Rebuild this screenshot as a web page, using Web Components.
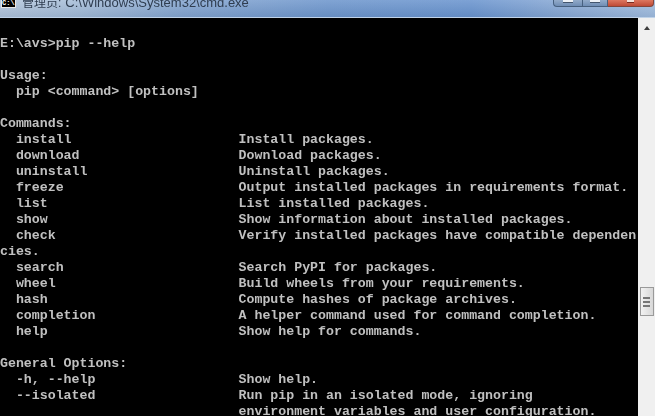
<!DOCTYPE html>
<html>
<head>
<meta charset="utf-8">
<title>cmd</title>
<style>
  html, body { margin: 0; padding: 0; background: #000; }
  body { width: 655px; height: 416px; overflow: hidden; }
</style>
</head>
<body>
<cmd-window role-text="管理员:" title-text="C:\Windows\System32\cmd.exe"><console-text>E:\avs&gt;pip --help

Usage:
  pip &lt;command&gt; [options]

Commands:
  install                     Install packages.
  download                    Download packages.
  uninstall                   Uninstall packages.
  freeze                      Output installed packages in requirements format.
  list                        List installed packages.
  show                        Show information about installed packages.
  check                       Verify installed packages have compatible dependen
cies.
  search                      Search PyPI for packages.
  wheel                       Build wheels from your requirements.
  hash                        Compute hashes of package archives.
  completion                  A helper command used for command completion.
  help                        Show help for commands.

General Options:
  -h, --help                  Show help.
  --isolated                  Run pip in an isolated mode, ignoring
                              environment variables and user configuration.</console-text></cmd-window>
<script>
class WindowButtons extends HTMLElement {
  constructor() {
    super();
    this.attachShadow({ mode: 'open' }).innerHTML = `
      <style>
        :host { display: flex; align-self: flex-start; margin-right: 1px; }
        div {
          height: 7px;
          box-sizing: border-box;
          border: 1px solid #47607f;
          border-top: 0;
          display: flex;
          justify-content: center;
          background: linear-gradient(#93abc9, #6f8db4);
        }
        .min { width: 29px; border-radius: 0 0 0 4px; border-right: 0; }
        .max { width: 26px; }
        .close { width: 46px; border-left: 0; border-radius: 0 0 4px 0; border-color: #84453a; background: linear-gradient(#dd7760, #bf4a36); }
        i { display: block; width: 10px; height: 3px; box-sizing: border-box; background: #eef2f7; border-bottom: 1px solid #44566e; }
        .close i { width: 7px; background: #f6e3dc; border-color: #7a2c20; }
      </style>
      <div class="min"><i></i></div>
      <div class="max"><i></i></div>
      <div class="close"><i></i></div>`;
  }
}

class TitleBar extends HTMLElement {
  constructor() {
    super();
    this.attachShadow({ mode: 'open' }).innerHTML = `
      <style>
        :host {
          display: flex;
          align-items: flex-start;
          justify-content: space-between;
          height: 18px;
          box-sizing: border-box;
          overflow: hidden;
          border-bottom: 1px solid #bfd2e8;
          background:
            linear-gradient(rgba(255,255,255,.12), rgba(40,70,110,.12)),
            linear-gradient(90deg, #b4c6dc 0, #a6bdd8 12%, #86a6d0 28%, #6f97cd 50%, #6b95cf 72%, #8fadd6 88%, #a4bfe0 100%);
        }
        .left { display: flex; align-items: flex-start; gap: 6px; margin-left: 1px; }
        .icon {
          width: 15px; height: 8px;
          box-sizing: border-box;
          background: #000; border: 1px solid #e8e8e8; border-top: 0;
          color: #fff;
          font: bold 7px/7px "Liberation Mono", monospace;
          overflow: hidden;
        }
        .title {
          margin-top: -5px;
          font: 13px/15px "Liberation Sans", "Noto Sans CJK SC", sans-serif;
          color: #2f3d50;
          white-space: nowrap;
          filter: blur(.3px);
          display: flex;
          align-items: baseline;
          gap: 4px;
        }
        .role { font-size: 12px; }
      </style>
      <div class="left"><span class="icon">C:\\</span><span class="title"><span class="role" id="role"></span><span><slot></slot></span></span></div>
      <window-buttons></window-buttons>`;
  }

  set role(text) {
    this.shadowRoot.getElementById('role').textContent = text;
  }
}

class ConsoleText extends HTMLElement {
  constructor() {
    super();
    this.attachShadow({ mode: 'open' }).innerHTML = `
      <style>
        :host {
          display: block;
          flex: 1;
          min-width: 0;
          overflow: hidden;
          background: #000;
          color: #c0c0c0;
          font: bold 13.25px/16px "Liberation Mono", "DejaVu Sans Mono", monospace;
          padding-top: 18px;
          box-sizing: border-box;
        }
        .lines { white-space: pre; filter: blur(.25px); }
      </style>
      <div class="lines"><slot></slot></div>`;
  }
}

class ScrollBar extends HTMLElement {
  constructor() {
    super();
    this.attachShadow({ mode: 'open' }).innerHTML = `
      <style>
        :host {
          display: flex;
          flex-direction: column;
          align-items: center;
          width: 17px;
          flex: none;
          background: #f0f0f0;
        }
        .arrow {
          margin-top: 8px;
          width: 0; height: 0;
          border: 3px solid transparent;
          border-top: 0;
          border-bottom: 4px solid #3c3c3c;
        }
        .thumb {
          margin-top: 257px;
          width: 14px; height: 29px;
          box-sizing: border-box;
          border: 1px solid #9a9a9a;
          background: linear-gradient(90deg, #f2f2f2, #d8d8d8);
          display: flex;
          flex-direction: column;
          align-items: center;
          justify-content: center;
          gap: 2px;
        }
        .thumb i { display: block; width: 7px; height: 2px; background: #777; }
      </style>
      <div class="arrow"></div>
      <div class="thumb"><i></i><i></i><i></i></div>`;
  }
}

class CmdWindow extends HTMLElement {
  constructor() {
    super();
    this.attachShadow({ mode: 'open' }).innerHTML = `
      <style>
        :host { display: flex; flex-direction: column; width: 655px; height: 416px; overflow: hidden; background: #000; }
        .body { display: flex; flex: 1; min-height: 0; }
        .content { display: flex; flex: 1; min-width: 0; }
      </style>
      <title-bar id="bar"></title-bar>
      <div class="body">
        <div class="content"><slot></slot></div>
        <scroll-bar></scroll-bar>
      </div>`;
  }

  connectedCallback() {
    const bar = this.shadowRoot.getElementById('bar');
    bar.textContent = this.getAttribute('title-text');
    bar.role = this.getAttribute('role-text');
  }
}

customElements.define('window-buttons', WindowButtons);
customElements.define('title-bar', TitleBar);
customElements.define('console-text', ConsoleText);
customElements.define('scroll-bar', ScrollBar);
customElements.define('cmd-window', CmdWindow);
</script>
</body>
</html>
